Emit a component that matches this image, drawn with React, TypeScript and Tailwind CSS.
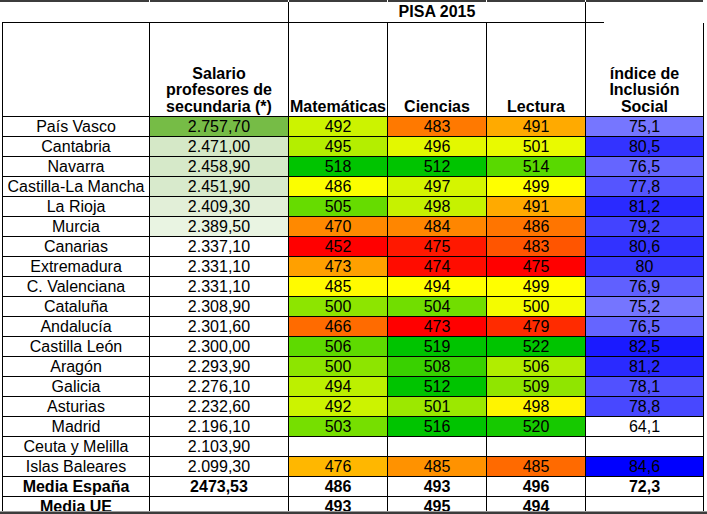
import type { CSSProperties, ReactNode } from "react";

type Row = {
  name: string;
  salary: string;
  salaryBg: string;
  scores: (number | null)[];
  inc: number | null;
};

const rows: Row[] = [
  { name: "País Vasco", salary: "2.757,70", salaryBg: "bg-[#76bc46]", scores: [492, 483, 491], inc: 75.1 },
  { name: "Cantabria", salary: "2.471,00", salaryBg: "bg-[#d5e8c7]", scores: [495, 496, 501], inc: 80.5 },
  { name: "Navarra", salary: "2.458,90", salaryBg: "bg-[#d6e9c9]", scores: [518, 512, 514], inc: 76.5 },
  { name: "Castilla-La Mancha", salary: "2.451,90", salaryBg: "bg-[#d8eacc]", scores: [486, 497, 499], inc: 77.8 },
  { name: "La Rioja", salary: "2.409,30", salaryBg: "bg-[#e2efd8]", scores: [505, 498, 491], inc: 81.2 },
  { name: "Murcia", salary: "2.389,50", salaryBg: "bg-[#e9f4e2]", scores: [470, 484, 486], inc: 79.2 },
  { name: "Canarias", salary: "2.337,10", salaryBg: "bg-white", scores: [452, 475, 483], inc: 80.6 },
  { name: "Extremadura", salary: "2.331,10", salaryBg: "bg-white", scores: [473, 474, 475], inc: 80 },
  { name: "C. Valenciana", salary: "2.331,10", salaryBg: "bg-white", scores: [485, 494, 499], inc: 76.9 },
  { name: "Cataluña", salary: "2.308,90", salaryBg: "bg-white", scores: [500, 504, 500], inc: 75.2 },
  { name: "Andalucía", salary: "2.301,60", salaryBg: "bg-white", scores: [466, 473, 479], inc: 76.5 },
  { name: "Castilla León", salary: "2.300,00", salaryBg: "bg-white", scores: [506, 519, 522], inc: 82.5 },
  { name: "Aragón", salary: "2.293,90", salaryBg: "bg-white", scores: [500, 508, 506], inc: 81.2 },
  { name: "Galicia", salary: "2.276,10", salaryBg: "bg-white", scores: [494, 512, 509], inc: 78.1 },
  { name: "Asturias", salary: "2.232,60", salaryBg: "bg-white", scores: [492, 501, 498], inc: 78.8 },
  { name: "Madrid", salary: "2.196,10", salaryBg: "bg-white", scores: [503, 516, 520], inc: 64.1 },
  { name: "Ceuta y Melilla", salary: "2.103,90", salaryBg: "bg-white", scores: [null, null, null], inc: null },
  { name: "Islas Baleares", salary: "2.099,30", salaryBg: "bg-white", scores: [476, 485, 485], inc: 84.6 },
];

// min / midpoint / max of each PISA colour scale
const scales = [
  [452, 485.5, 518],
  [473, 494, 512],
  [475, 499, 522],
];

const RED = [255, 0, 0];
const YELLOW = [255, 255, 0];
const GREEN = [0, 196, 0];

function lerp(a: number[], b: number[], t: number) {
  const k = Math.min(1, Math.max(0, t));
  return `rgb(${a.map((c, i) => Math.round(c + (b[i] - c) * k)).join(",")})`;
}

function heat(v: number, [lo, mid, hi]: number[]) {
  return v <= mid
    ? lerp(RED, YELLOW, (v - lo) / (mid - lo))
    : lerp(YELLOW, GREEN, (v - mid) / (hi - mid));
}

function blue(v: number) {
  return lerp([255, 255, 255], [0, 0, 255], (v - 64.1) / (84.6 - 64.1));
}

const cols = "grid grid-cols-[147px_139px_99px_99px_99px_118px]";

function Cell({
  children,
  className = "",
  style,
}: {
  children?: ReactNode;
  className?: string;
  style?: CSSProperties;
}) {
  return (
    <div
      className={`flex h-[20px] items-center justify-center whitespace-nowrap border-r border-b border-black leading-[19px] ${className}`}
      style={style}
    >
      {children}
    </div>
  );
}

function Head({ children }: { children: ReactNode }) {
  return (
    <div className="flex h-[94px] flex-col items-center justify-end border-r border-b border-black pb-px text-center font-bold leading-[16.5px]">
      {children}
    </div>
  );
}

export default function App() {
  return (
    <div className="flex h-[514px] w-[707px] flex-col overflow-hidden bg-white font-['Liberation_Sans',Arial,sans-serif] text-[16px] text-black">
      <div className="flex-1 overflow-hidden">
        {/* sheet edge */}
        <div className="flex h-[2px] gap-px">
          <div className="w-[149px] bg-[#3c3c3c]" />
          <div className="w-[138px] bg-[#3c3c3c]" />
          <div className="w-[98px] bg-[#3c3c3c]" />
          <div className="w-[98px] bg-[#3c3c3c]" />
          <div className="w-[98px] bg-[#3c3c3c]" />
          <div className="w-[117px] bg-[#3c3c3c]" />
        </div>

        <div className="ml-[2px] grid h-[20px] grid-cols-[1px_147px_139px_297px_118px]">
          <div />
          <div />
          <div className="border-r border-black" />
          <div className="border-r border-black text-center font-bold leading-[20px]">PISA 2015</div>
          <div />
        </div>

        <div className="ml-[2px] w-[602px] border-l border-t border-black">
          <div className={cols}>
            <Head>{""}</Head>
            <Head>
              <span>Salario profesores de secundaria (*)</span>
            </Head>
            <Head>Matemáticas</Head>
            <Head>Ciencias</Head>
            <Head>Lectura</Head>
            <Head>
              <span>índice de Inclusión Social</span>
            </Head>
          </div>

          {rows.map((r) => (
            <div key={r.name} className={cols}>
              <Cell>{r.name}</Cell>
              <Cell className={r.salaryBg}>{r.salary}</Cell>
              {r.scores.map((s, i) => (
                <Cell key={i} style={s === null ? undefined : { backgroundColor: heat(s, scales[i]) }}>
                  {s}
                </Cell>
              ))}
              <Cell style={r.inc === null ? undefined : { backgroundColor: blue(r.inc) }}>
                {r.inc === null ? "" : String(r.inc).replace(".", ",")}
              </Cell>
            </div>
          ))}

          <div className={`${cols} font-bold`}>
            <Cell>Media España</Cell>
            <Cell>2473,53</Cell>
            <Cell>486</Cell>
            <Cell>493</Cell>
            <Cell>496</Cell>
            <Cell>72,3</Cell>
          </div>
          <div className={`${cols} font-bold`}>
            <Cell>Media UE</Cell>
            <Cell />
            <Cell>493</Cell>
            <Cell>495</Cell>
            <Cell>494</Cell>
            <Cell />
          </div>
        </div>
      </div>
      <div className="h-px bg-[#9a9a9a]" />
      <div className="h-[2px] bg-[#3c3c3c]" />
    </div>
  );
}
